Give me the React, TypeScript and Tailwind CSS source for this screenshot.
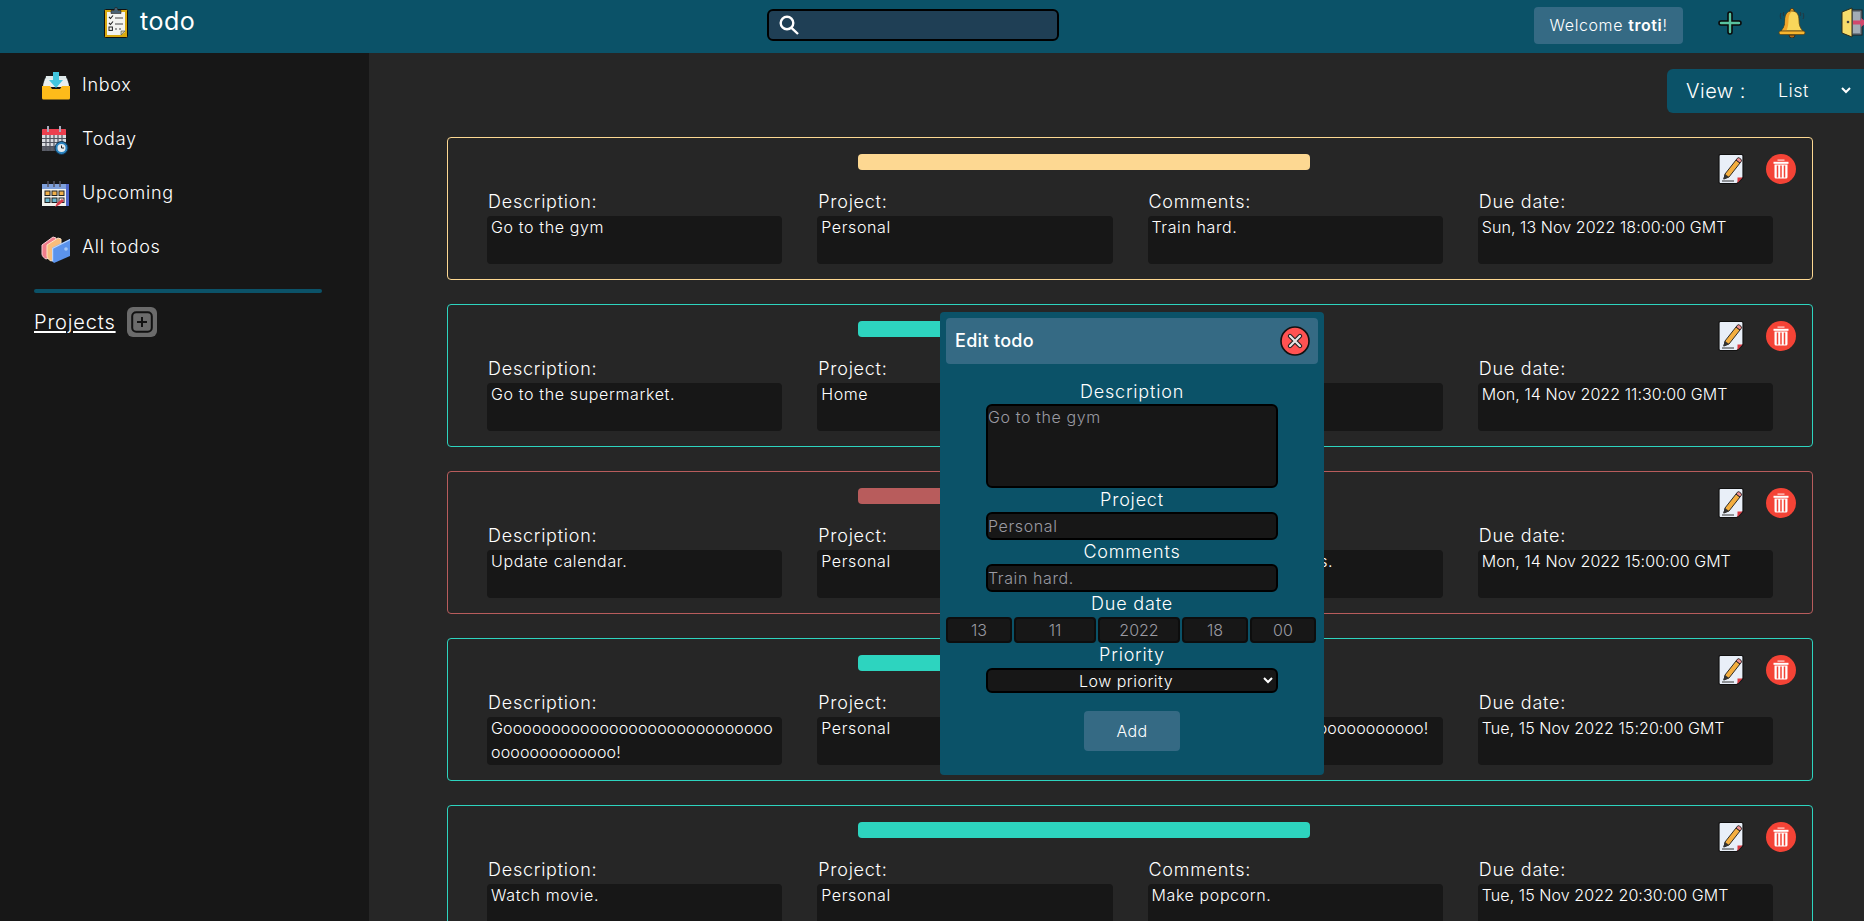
import React from "react";

const FF = "font-['Inter','Noto_Sans',sans-serif]";

function Logo() {
  return (
    <svg width="24" height="31" viewBox="0 0 24 31" className="shrink-0">
      <rect x="0.5" y="2.5" width="23" height="28" rx="1" fill="#d9a90f" stroke="#111" />
      <path d="M3 5h18v20l-4 3H3z" fill="#f4f4f0" />
      <path d="M17 28l4-4h-4z" fill="#d9d2a8" stroke="#333" strokeWidth="0.5" />
      <path d="M7 3.5h3l1-3h2l1 3h3v3H7z" fill="#4a6172" stroke="#222" strokeWidth="0.6" />
      <path d="M5 10l1.5 1.5L9 8.5M5 16l1.5 1.5L9 14.5" fill="none" stroke="#222" strokeWidth="1.1" />
      <rect x="5" y="20" width="3.4" height="3.4" fill="none" stroke="#222" />
      <path d="M11 11h8M11 17h8M11 22h2M15 22h2" stroke="#444" strokeWidth="1.2" />
    </svg>
  );
}

function InboxIcon() {
  return (
    <svg width="30" height="28" viewBox="0 0 30 28" className="shrink-0">
      <path d="M4 6h22l2 8H2z" fill="#7f8f96" />
      <path d="M5 4h20l1 6H4z" fill="#dfe9ea" />
      <path d="M3 9h24l1 5H2z" fill="#aebcc0" />
      <path d="M4 7h7l4 5 4-5h7l2 8H2z" fill="#e8eeee" />
      <path d="M12 0h6v8h4l-7 8-7-8h4z" fill="#42c6df" />
      <path d="M1 14h8l2 3h8l2-3h8v12a1.5 1.5 0 0 1-1.5 1.5h-25A1.5 1.5 0 0 1 1 26z" fill="#fdbb1a" />
    </svg>
  );
}

function TodayIcon() {
  return (
    <svg width="28" height="29" viewBox="0 0 28 29" className="shrink-0">
      <rect x="1" y="3" width="24" height="22" rx="1.5" fill="#d9dbe0" />
      <path d="M1 4.5A1.5 1.5 0 0 1 2.500 3h21A1.500 1.500 0 0 1 25 4.500V9H1z" fill="#ec3f4f" />
      <path d="M7 0v6M19 0v6" stroke="#aab" strokeWidth="2" />
      <path d="M1 21h24v4H1z" fill="#5b5e68" />
      <path d="M5 9v16M9 9v16M13 9v16M17 9v16M21 9v16M1 12.500h24M1 16.500h24M1 20.500h24" stroke="#50535e" strokeWidth="1.200" />
      <circle cx="20.500" cy="22" r="6.500" fill="#2a83bf" stroke="#12304a" />
      <circle cx="20.500" cy="22" r="4" fill="#e7ecef" />
      <path d="M20.500 19.500V22h2.500" stroke="#222" fill="none" />
    </svg>
  );
}

function UpcomingIcon() {
  return (
    <svg width="29" height="27" viewBox="0 0 29 27" className="shrink-0">
      <rect x="0.500" y="2.500" width="28" height="23" fill="#101018" />
      <rect x="25" y="3" width="3" height="22" fill="#4f66c9" />
      <rect x="1" y="3" width="24" height="22" fill="#f3f3ee" />
      <path d="M1 3h24v5H1z" fill="#7ea0dc" />
      <path d="M7 0v6M13 0v6M19 0v6" stroke="#556" strokeWidth="1.500" />
      <rect x="4" y="10" width="5" height="4.500" fill="#f1b04a" stroke="#222" />
      <rect x="11" y="10" width="5" height="4.500" fill="#f1b04a" stroke="#222" />
      <rect x="18" y="10" width="5" height="4.500" fill="#f1b04a" stroke="#222" />
      <rect x="4" y="17" width="5" height="4.500" fill="#69b6cf" stroke="#222" />
      <rect x="11" y="17" width="5" height="4.500" fill="#69b6cf" stroke="#222" />
      <rect x="18" y="17" width="5" height="4.500" fill="#f3f3ee" stroke="#222" />
      <path d="M14 26l2-4 5-4 2 2-5 4z" fill="#d83a48" />
    </svg>
  );
}

function AllTodosIcon() {
  return (
    <svg width="30" height="29" viewBox="0 0 30 29" className="shrink-0">
      <path d="M1 11L12 3l3 1 0 17L5 25c-2-1-4-3-4-5z" fill="#f27d8c" stroke="#fbd0d5" strokeWidth="1" />
      <path d="M6 11L17 4l3 1 0 18L10 27c-2-1-4-3-4-5z" fill="#f8bd7c" stroke="#fde5c7" strokeWidth="1" />
      <path d="M11 14l18-9v17l-16 7-2-2z" fill="#5b93ec" />
      <path d="M11 14l18-9v1.200l-16.800 8.600v13.200l-1.200-1z" fill="#bcd6fb" />
      <circle cx="25" cy="15" r="1.800" fill="#a6c8f7" />
    </svg>
  );
}

function PlusBox() {
  return (
    <button className="flex h-[30px] w-[30px] items-center justify-center rounded-md bg-[#6b6b6b]">
      <svg width="22" height="22" viewBox="0 0 22 22">
        <rect x="1.200" y="1.200" width="19.600" height="19.600" rx="4" fill="none" stroke="#111" strokeWidth="2" />
        <path d="M11 6v10M6 11h10" stroke="#111" strokeWidth="2" />
      </svg>
    </button>
  );
}

function SearchIcon() {
  return (
    <svg width="20" height="20" viewBox="0 0 20 20" className="shrink-0">
      <circle cx="8" cy="8" r="6.300" fill="none" stroke="#fff" strokeWidth="2.400" />
      <path d="M12.500 12.800L19 19" stroke="#fff" strokeWidth="2.400" />
    </svg>
  );
}

function GreenPlus() {
  return (
    <svg width="24" height="24" viewBox="0 0 24 24">
      <path d="M12 3v18M3 12h18" stroke="#0a0a0a" strokeWidth="5.600" strokeLinecap="round" />
      <path d="M12 3v18M3 12h18" stroke="#58c2a0" strokeWidth="2.400" strokeLinecap="round" />
    </svg>
  );
}

function Bell() {
  return (
    <svg width="28" height="30" viewBox="0 0 28 30">
      <path d="M3 5c-1 2-1 4 0 6M6 4c-1 1-1 3 0 4M25 5c1 2 1 4 0 6M22 4c1 1 1 3 0 4" stroke="#26363f" strokeWidth="1" fill="none" />
      <path d="M11 27a3 3 0 0 0 6 0z" fill="#b36b12" stroke="#222" strokeWidth="0.800" />
      <circle cx="14" cy="2.500" r="2" fill="#f7a928" stroke="#3a2b10" strokeWidth="0.800" />
      <path d="M14 3c-5 0-7 4-7 9 0 5-1 8-4 11h22c-3-3-4-6-4-11 0-5-2-9-7-9z" fill="#f9d65a" stroke="#5c4212" strokeWidth="0.800" />
      <path d="M14 3.400c-4.600 0-6.600 4-6.600 8.600 0 5-1 8-3.400 10.600h4.500c1.500-3 2-7 2-11 0-4 1.500-7 3.500-8.200z" fill="#f2a52a" />
      <rect x="1" y="23" width="26" height="3.600" rx="1.800" fill="#f7b52e" stroke="#5c4212" strokeWidth="0.800" />
    </svg>
  );
}

function Door() {
  return (
    <svg width="26" height="31" viewBox="0 0 26 31" className="shrink-0">
      <rect x="10" y="3" width="11" height="25" fill="#727d87" stroke="#222" strokeWidth="1" />
      <rect x="12" y="5" width="7" height="21" fill="#a3acb5" />
      <path d="M1 5l10-4v29L1 26z" fill="#f7dc6b" stroke="#2a2a1a" strokeWidth="1" />
      <circle cx="7" cy="15" r="1.300" fill="#444" />
      <path d="M12 13.500h8V11l6 4.500-6 4.500v-2.500h-8z" fill="#d2486c" />
    </svg>
  );
}

function EditIcon() {
  return (
    <svg width="26" height="30" viewBox="0 0 26 30" className="shrink-0">
      <path d="M1 2a1.500 1.500 0 0 1 1.500-1.500h21A1.500 1.500 0 0 1 25 2v21.500l-6 6H2.500A1.500 1.500 0 0 1 1 28z" fill="#e9eff8" stroke="#111" strokeWidth="1.200" />
      <path d="M7 20L18 6l4 3-11 14-5 2z" fill="#f4ae3f" stroke="#1a1a1a" strokeWidth="0.900" />
      <path d="M18 6l1.300-1.700a1.500 1.500 0 0 1 2-.300l1.700 1.300a1.500 1.500 0 0 1 .300 2L22 9z" fill="#ef8f8f" stroke="#1a1a1a" strokeWidth="0.900" />
      <path d="M7 20l-2 5.500 6-2.500z" fill="#333" />
      <path d="M4 27h12" stroke="#333" strokeWidth="1" />
      <path d="M19.500 29l5-5.500h-5z" fill="#d9363e" />
    </svg>
  );
}

function TrashIcon() {
  return (
    <svg width="30" height="30" viewBox="0 0 30 30" className="shrink-0">
      <circle cx="15" cy="15" r="15" fill="#f44336" />
      <rect x="11.500" y="5.500" width="7" height="1.200" fill="#ffd9d6" />
      <rect x="7.500" y="7.800" width="15" height="2" fill="#fff" />
      <path d="M8.500 10.500h13V23a1.500 1.500 0 0 1-1.500 1.500H10A1.500 1.500 0 0 1 8.500 23z" fill="#fff" />
      <path d="M11.500 11.500v12M15 11.500v12M18.500 11.500v12" stroke="#f44336" strokeWidth="1.500" />
    </svg>
  );
}

function CloseIcon() {
  return (
    <button className="h-[30px] w-[30px] shrink-0">
      <svg width="30" height="30" viewBox="0 0 30 30">
        <circle cx="15" cy="15" r="14" fill="#ff5252" stroke="#111" strokeWidth="1.600" />
        <path d="M10 10l10 10M20 10L10 20" stroke="#222" strokeWidth="4.400" strokeLinecap="round" />
        <path d="M10 10l10 10M20 10L10 20" stroke="#e6e6e6" strokeWidth="2.200" strokeLinecap="round" />
      </svg>
    </button>
  );
}

const navItems = [
  { label: "Inbox", icon: <InboxIcon /> },
  { label: "Today", icon: <TodayIcon /> },
  { label: "Upcoming", icon: <UpcomingIcon /> },
  { label: "All todos", icon: <AllTodosIcon /> },
];

type Todo = { color: string; bar: string; d: string; p: string; c: string; due: string };

const todos: Todo[] = [
  { color: "border-[#fdd892]", bar: "bg-[#fdd892]", d: "Go to the gym", p: "Personal", c: "Train hard.", due: "Sun, 13 Nov 2022 18:00:00 GMT" },
  { color: "border-[#2dd4bf]", bar: "bg-[#2dd4bf]", d: "Go to the supermarket.", p: "Home", c: "", due: "Mon, 14 Nov 2022 11:30:00 GMT" },
  { color: "border-[#b85c5c]", bar: "bg-[#b85c5c]", d: "Update calendar.", p: "Personal", c: "Plan new reservations.", due: "Mon, 14 Nov 2022 15:00:00 GMT" },
  { color: "border-[#2dd4bf]", bar: "bg-[#2dd4bf]", d: "Goooooooooooooooooooooooooooo\nooooooooooooo!", p: "Personal", c: "Gooooooooooooooooooooooooooo!", due: "Tue, 15 Nov 2022 15:20:00 GMT" },
  { color: "border-[#2dd4bf]", bar: "bg-[#2dd4bf]", d: "Watch movie.", p: "Personal", c: "Make popcorn.", due: "Tue, 15 Nov 2022 20:30:00 GMT" },
];

function Field({ label, value, tracking }: { label: string; value: string; tracking: string }) {
  return (
    <div className="min-w-0">
      <div className="pl-px text-[18px] leading-[22px] font-light tracking-[0.75px] text-white">{label}</div>
      <div className={`mt-[3px] h-[48px] overflow-hidden rounded bg-[#171717] px-[4px] text-[16px] leading-6 font-light whitespace-pre-line text-white ${tracking}`}>
        <div className="-mt-px">{value}</div>
      </div>
    </div>
  );
}

function TodoCard({ t }: { t: Todo }) {
  const longD = t.d.includes("ooo");
  const longC = t.c.includes("ooo");
  return (
    <div className={`h-[143px] shrink-0 rounded border ${t.color} px-[39px]`}>
      <div className="-mr-[23px] flex h-[53px] items-start pt-[16px]">
        <div className={`ml-[371px] h-4 w-[452px] rounded ${t.bar}`} />
        <div className="ml-auto flex gap-[22px]">
          <EditIcon />
          <TrashIcon />
        </div>
      </div>
      <div className="grid grid-cols-4 gap-x-[35px]">
        <Field label="Description:" value={t.d} tracking={longD ? "tracking-[0.15px]" : "tracking-[0.63px]"} />
        <Field label="Project:" value={t.p} tracking="tracking-[0.6px]" />
        <Field label="Comments:" value={t.c} tracking={longC ? "tracking-[0.15px]" : "tracking-[0.6px]"} />
        <Field label="Due date:" value={t.due} tracking="tracking-[0.07px]" />
      </div>
    </div>
  );
}

const inputCls =
  "w-[292px] rounded-md border-2 border-black bg-[#171717] px-0 text-[16px] font-light tracking-[0.6px] text-white outline-none placeholder:text-[#9a9aa2]";
const dateCls =
  "h-[26px] min-w-0 rounded border-2 border-[#0d0d0d] bg-[#171717] text-center text-[16px] font-light text-white outline-none placeholder:text-[#9a9aa2]";
const labelCls = "my-px text-center text-[18px] leading-[22px] font-light tracking-[0.8px] text-white";

function EditModal() {
  return (
    <div className="absolute top-[312px] left-[940px] flex h-[463px] w-[384px] flex-col rounded bg-[#0b5268] px-[6px] pt-[6px]">
      <div className="flex h-[46px] shrink-0 items-center justify-between rounded bg-[#356a84] pr-2 pl-[9px]">
        <span className="mb-[2px] text-[18px] font-medium tracking-[0.3px] text-white">Edit todo</span>
        <CloseIcon />
      </div>
      <div className="mt-[16px] flex flex-col items-center">
        <div className={labelCls}>Description</div>
        <textarea readOnly placeholder="Go to the gym" className={`${inputCls} h-[84px] resize-none leading-[22px]`} />
        <div className={labelCls}>Project</div>
        <input readOnly placeholder="Personal" className={`${inputCls} h-[28px]`} />
        <div className={labelCls}>Comments</div>
        <input readOnly placeholder="Train hard." className={`${inputCls} h-[28px]`} />
        <div className={`${labelCls} mb-[2px]`}>Due date</div>
        <div className="flex w-full gap-[2px]">
          <input readOnly placeholder="13" className={`${dateCls} w-[66px]`} />
          <input readOnly placeholder="11" className={`${dateCls} w-[82px]`} />
          <input readOnly placeholder="2022" className={`${dateCls} w-[82px]`} />
          <input readOnly placeholder="18" className={`${dateCls} w-[66px]`} />
          <input readOnly placeholder="00" className={`${dateCls} w-[66px]`} />
        </div>
        <div className={`${labelCls} mb-[2px]`}>Priority</div>
        <select className="h-[25px] w-[292px] rounded-md border-2 border-black bg-[#171717] text-center text-[16px] font-light tracking-[0.5px] text-white outline-none">
          <option>Low priority</option>
        </select>
        <button className="mt-[18px] h-10 w-[96px] rounded bg-[#356a84] text-[16px] font-light tracking-[0.3px] text-white">Add</button>
      </div>
    </div>
  );
}

export default function App() {
  return (
    <div className={`relative flex h-screen w-full flex-col overflow-hidden bg-[#262626] ${FF}`}>
      <header className="flex h-[53px] shrink-0 items-center overflow-hidden bg-[#0b5268]">
        <div className="mb-[8px] flex w-[767px] shrink-0 items-center pl-[104px]">
          <Logo />
          <span className="mb-[2px] ml-3 text-[25px] font-normal tracking-[0.5px] text-white">todo</span>
        </div>
        <div className="mb-[3px] flex h-[32px] w-[292px] shrink-0 items-center rounded-md border-2 border-black bg-[#1f3f55] pl-[10px]">
          <SearchIcon />
        </div>
        <div className="mb-[2px] ml-[475px] flex h-[37px] w-[149px] shrink-0 items-center justify-center rounded bg-[#356a84] text-[16px] font-light tracking-[0.6px] text-white">
          <span className="mb-[2px]">Welcome <b className="font-semibold">troti</b>!</span>
        </div>
        <div className="mb-[8px] ml-[35px] flex shrink-0 items-center">
          <GreenPlus />
        </div>
        <div className="mb-[8px] ml-[36px] flex shrink-0 items-center">
          <Bell />
        </div>
        <div className="mb-[8px] ml-[35px] flex shrink-0 items-center">
          <Door />
        </div>
      </header>
      <div className="flex min-h-0 flex-1">
        <aside className="w-[369px] shrink-0 bg-[#171717] pt-[19px]">
          <nav className="flex flex-col gap-[26px] pl-[41px]">
            {navItems.map((n) => (
              <div key={n.label} className="flex h-[28px] items-center">
                <span className="flex w-[41px] shrink-0 items-center">{n.icon}</span>
                <span className="mb-[3px] text-[18px] font-light tracking-[0.7px] text-white">{n.label}</span>
              </div>
            ))}
          </nav>
          <div className="mt-[27px] ml-[34px] h-1 w-[288px] rounded bg-[#0b5268]" />
          <div className="mt-[14px] ml-[34px] flex items-center gap-[11px]">
            <span className="text-[20px] font-light tracking-[0.85px] text-white underline underline-offset-2">Projects</span>
            <PlusBox />
          </div>
        </aside>
        <main className="flex min-w-0 flex-1 flex-col">
          <div className="flex h-[84px] shrink-0 justify-end pt-[16px]">
            <div className="flex h-[44px] w-[197px] items-center rounded-l-md bg-[#0b5268] pl-[19px] text-white">
              <span className="shrink-0 text-[20px] font-light tracking-[0.5px] whitespace-nowrap">View :</span>
              <select className="mb-px ml-[8px] w-[100px] bg-[#0b5268] pl-[20px] text-[18px] font-light tracking-[0.5px] text-white outline-none">
                <option>List</option>
              </select>
            </div>
          </div>
          <div className="flex flex-col gap-[24px] pr-[51px] pl-[78px]">
            {todos.map((t, i) => (
              <TodoCard key={i} t={t} />
            ))}
          </div>
        </main>
      </div>
      <EditModal />
    </div>
  );
}
